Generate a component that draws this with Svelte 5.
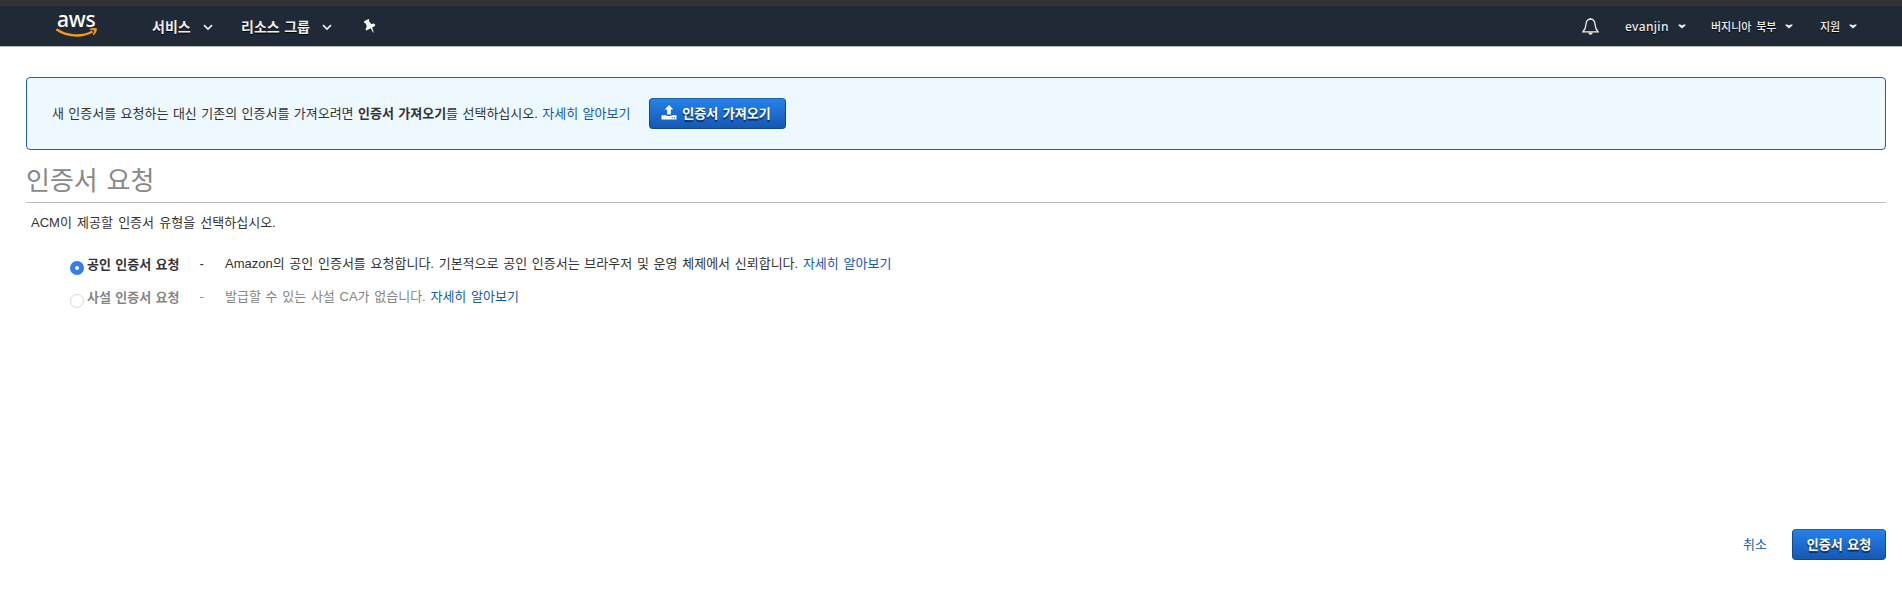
<script>
  const left = [
    { label: '서비스', w: 89 },
    { label: '리소스 그룹', w: 121 }
  ];
  const right = [
    { label: 'evanjin', w: 86, latin: true },
    { label: '버지니아 북부', w: 109 },
    { label: '지원', w: 56 }
  ];
  let selected = $state('public');
</script>

<div class="strip"></div>
<header>
  <div class="logo">
    <span>aws</span>
    <svg width="42" height="11" viewBox="0 17 42 11">
      <path d="M.4 18.3C11 25.7 26 26.5 36.5 20.5" fill="none" stroke="#f7981f" stroke-width="2.3" />
      <path d="M34 17.9c3-1.2 6-1.2 6.6-.4.5 1-.6 4.6-2.9 6.5l-.7-.3c1-2 1.5-3.6 1.1-4.3-.5-.7-2.1-.7-4.1-.5Z" fill="#f7981f" stroke="#f7981f" stroke-width=".4" />
    </svg>
  </div>
  <nav class="left">
    {#each left as item}
      <a class="item" style="width: {item.w}px"><span>{item.label}</span>
        <svg width="10" height="7" viewBox="0 0 10 7"><path d="M1 1.2 5 5 9 1.2" fill="none" stroke="#eee" stroke-width="1.7" /></svg>
      </a>
    {/each}
    <svg class="pin" width="13" height="14" viewBox="0 0 13 14"><path d="M1.2 2.2 5.6.1l.8 1-.5 1 2.3 2.8 2.8-.4 1.3 1.6-.3 1-2.9 1.4 1.7 4.9-.7.2-2.4-4.4-4.4 2.2-.7-.8 1.2-3.5-1.3-2.8-1.3-.2Z" fill="#fff" /></svg>
  </nav>
  <nav class="right">
    <svg class="bell" width="17" height="18" viewBox="0 0 17 18"><path d="M8.5 1.1C5.4 1.1 4.2 3.3 4 6.3c-.2 3.4-.6 4.8-3 7.5h15c-2.4-2.7-2.8-4.1-3-7.5-.2-3-1.4-5.2-4.5-5.2Z" fill="none" stroke="#eee" stroke-width="1.3" /><path d="M6.4 14.5h4.2c0 3-4.2 3-4.2 0ZM7.7 0h1.6v1.5H7.7Z" fill="#eee" /></svg>
    {#each right as item}
      <a class="item" class:latin={item.latin} style="width: {item.w}px"><span>{item.label}</span>
        <svg width="8" height="5" viewBox="0 0 8 5"><path d="M.5.5h1.8L4 1.6 5.7.5h1.8v.9L4 4.6.5 1.4Z" fill="#eee" /></svg>
      </a>
    {/each}
  </nav>
</header>

<main>
  <section class="notice">
    <p>새 인증서를 요청하는 대신 기존의 인증서를 가져오려면 <b>인증서 가져오기</b>를 선택하십시오. <a>자세히 알아보기</a></p>
    <button class="import">
      <svg width="16" height="15" viewBox="0 0 16 15"><path d="M8 0l4.3 4.6H9.8v5H6.2v-5H3.7ZM.5 10.3h4.3c.6 1 5.8 1 6.4 0h4.3v4.2H.5Z" fill="#fff" /><path d="M10.8 12.3h1v1h-1ZM13 12.3h1v1h-1Z" fill="#1a62bd" /></svg>
      <span>인증서 가져오기</span>
    </button>
  </section>
  <h1>인증서 요청</h1>
  <p class="intro">ACM이 제공할 인증서 유형을 선택하십시오.</p>
  <div class="options">
    <label class="option">
      <input type="radio" value="public" bind:group={selected} />
      <b>공인 인증서 요청</b><i>-</i>
      <span>Amazon의 공인 인증서를 요청합니다. 기본적으로 공인 인증서는 브라우저 및 운영 체제에서 신뢰합니다. <a>자세히 알아보기</a></span>
    </label>
    <label class="option off">
      <input type="radio" value="private" bind:group={selected} disabled />
      <b>사설 인증서 요청</b><i>-</i>
      <span>발급할 수 있는 사설 CA가 없습니다. <a>자세히 알아보기</a></span>
    </label>
  </div>
  <footer>
    <a>취소</a>
    <button class="submit">인증서 요청</button>
  </footer>
</main>

<style>
  :global(body) { background: #fff; overflow: hidden; }
  .strip { height: 6px; background: #333; }
  header, main, button {
    font-family: "Liberation Sans", "Noto Sans CJK KR", sans-serif;
  }
  header {
    height: 40px;
    display: flex;
    align-items: center;
    background: #202a37;
    border-bottom: 1px solid #b9bcc0;
    color: #eee;
    text-shadow: 0 1px 1px #000;
  }
  .logo {
    flex: none;
    width: 42px;
    height: 40px;
    margin-left: 56px;
    text-shadow: none;
  }
  .logo span {
    display: block;
    height: 22px;
    padding-left: 1px;
    color: #fff;
    font: 500 21px/27px "Noto Sans", sans-serif;
    letter-spacing: -.2px;
  }
  .logo svg { display: block; }
  nav { display: flex; align-items: center; }
  .left { margin-left: 54px; font-size: 14px; font-weight: 700; word-spacing: .6px; }
  .item { display: flex; align-items: center; white-space: nowrap; color: #eee; }
  .item span { line-height: 20px; padding-top: 1px; }
  .left .item svg { margin: 2px 0 0 12px; }
  .pin { margin-left: 1px; }
  .right { margin-left: auto; margin-right: 26px; font-size: 11px; font-weight: 500; word-spacing: 1.6px; }
  .bell { margin: 1px 26px 0 0; }
  .right .item svg { margin: 1px 0 0 9px; }
  .right .latin { font-family: "Noto Sans", sans-serif; font-size: 12px; font-weight: 500; letter-spacing: .35px; }
  main { padding: 30px 16px 0 26px; font-size: 13px; line-height: 20px; color: #333; word-spacing: .8px; }
  p, h1 { margin: 0; }
  main a { color: #0f5bb5; }
  .notice {
    box-sizing: border-box;
    height: 73px;
    display: flex;
    align-items: center;
    padding: 0 25px 0 25px;
    border: 1px solid #1464b4;
    border-radius: 4px;
    background: #edf8ff;
  }
  .notice p { width: 597px; white-space: nowrap; }
  button {
    box-sizing: border-box;
    height: 31px;
    border: 1px solid #114a8c;
    border-top-color: #1b62ae;
    border-radius: 4px;
    background: linear-gradient(#2681ea, #1459b3);
    color: #fff;
    font-size: 13px;
    font-weight: 700;
    line-height: 20px;
    text-shadow: 0 2px 1px rgba(0, 0, 0, .55);
    display: flex;
    align-items: center;
    justify-content: center;
    padding: 0;
    white-space: nowrap;
    word-spacing: 1px;
  }
  .import { width: 137px; gap: 5px; padding-right: 3px; }
  .import svg { margin-top: -2px; }
  h1 {
    height: 52px;
    border-bottom: 1px solid #bbb;
    color: #888;
    font-size: 26px;
    line-height: 63px;
    font-weight: 400;
    word-spacing: 1.6px;
  }
  .intro { padding: 10px 0 0 5px; word-spacing: 1.6px; }
  .options { padding: 21px 0 0 44px; }
  .option { height: 33px; display: flex; align-items: flex-start; white-space: nowrap; }
  .option span { word-spacing: 1.1px; }
  .option b { width: 112.5px; padding-top: 1px; }
  .option i { width: 25.5px; font-style: normal; }
  input {
    appearance: none;
    box-sizing: border-box;
    width: 14px;
    height: 14px;
    margin: 7px 3px 0 0;
    border: 1px solid #d8d8d8;
    border-radius: 50%;
    background: #fff;
  }
  input:checked { border: 5px solid #337bfa; }
  .off { color: #858585; }
  footer { display: flex; justify-content: flex-end; align-items: center; gap: 25px; margin-top: 209px; }
  .submit { width: 94px; }
</style>
